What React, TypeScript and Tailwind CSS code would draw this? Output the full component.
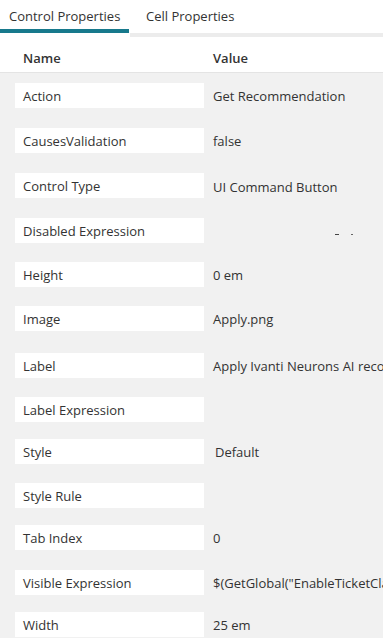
import React from 'react'

type Row = { name: string; value?: React.ReactNode; top: string; valueClass?: string }

const ROWS: Row[] = [
  { name: 'Action', value: 'Get Recommendation', top: 'mt-[10px]' },
  { name: 'CausesValidation', value: 'false', top: 'mt-[20px]' },
  { name: 'Control Type', value: 'UI Command Button', top: 'mt-[20px]', valueClass: 'pt-[2px]' },
  {
    name: 'Disabled Expression',
    value: (
      <span className="flex items-center pl-[122px] pt-[8px]">
        <span className="h-[1px] w-[4px] bg-[#444]" />
        <span className="ml-[12px] h-[1px] w-[2px] bg-[#666]" />
      </span>
    ),
    top: 'mt-[20px]'
  },
  { name: 'Height', value: '0 em', top: 'mt-[19px]' },
  { name: 'Image', value: 'Apply.png', top: 'mt-[19px]' },
  { name: 'Label', value: 'Apply Ivanti Neurons AI recommendation', top: 'mt-[22px]' },
  { name: 'Label Expression', top: 'mt-[19px]' },
  { name: 'Style', value: 'Default', top: 'mt-[17px]', valueClass: 'pl-[2px]' },
  { name: 'Style Rule', top: 'mt-[19px]' },
  { name: 'Tab Index', value: '0', top: 'mt-[17px]' },
  { name: 'Visible Expression', value: '$(GetGlobal("EnableTicketClassification"))', top: 'mt-[20px]' },
  { name: 'Width', value: '25 em', top: 'mt-[17px]' }
]

function PropertyRow({ row }: { row: Row }) {
  return (
    <div className={`flex h-[25px] items-center ${row.top}`}>
      <div className="ml-[15px] flex h-[25px] w-[189px] shrink-0 items-center bg-white pl-[8px] text-[13px] leading-[20px] text-[#333]">
        {row.name}
      </div>
      <div className={`ml-[9px] whitespace-nowrap text-[13px] leading-[20px] text-[#333] ${row.valueClass ?? ''}`}>
        {row.value}
      </div>
    </div>
  )
}

export default function App() {
  return (
    <div
      className="h-[638px] w-[383px] overflow-hidden bg-[#f1f1f1]"
      style={{ fontFamily: '"Open Sans", "Noto Sans", sans-serif' }}
    >
      <div className="flex h-[37px] bg-white">
        <div className="w-[130px] shrink-0">
          <div className="h-[29px] pl-[9px] pt-[6px] text-[13px] leading-[20px] text-[#333]">Control Properties</div>
          <div className="h-[4px] w-[129px] bg-[#17798c]" />
        </div>
        <div className="h-[37px] flex-1 border-b-[4px] border-[#ececec]">
          <div className="pl-[16px] pt-[6px] text-[13px] leading-[20px] text-[#333]">Cell Properties</div>
        </div>
      </div>

      <div className="flex h-[36px] border-b border-[#e4e4e4] bg-white pt-[11px] text-[13px] font-semibold leading-[20px] text-[#333]">
        <div className="w-[213px] pl-[23px]">Name</div>
        <div>Value</div>
      </div>

      <div className="flex flex-col">
        {ROWS.map(row => (
          <PropertyRow key={row.name} row={row} />
        ))}
      </div>
    </div>
  )
}
